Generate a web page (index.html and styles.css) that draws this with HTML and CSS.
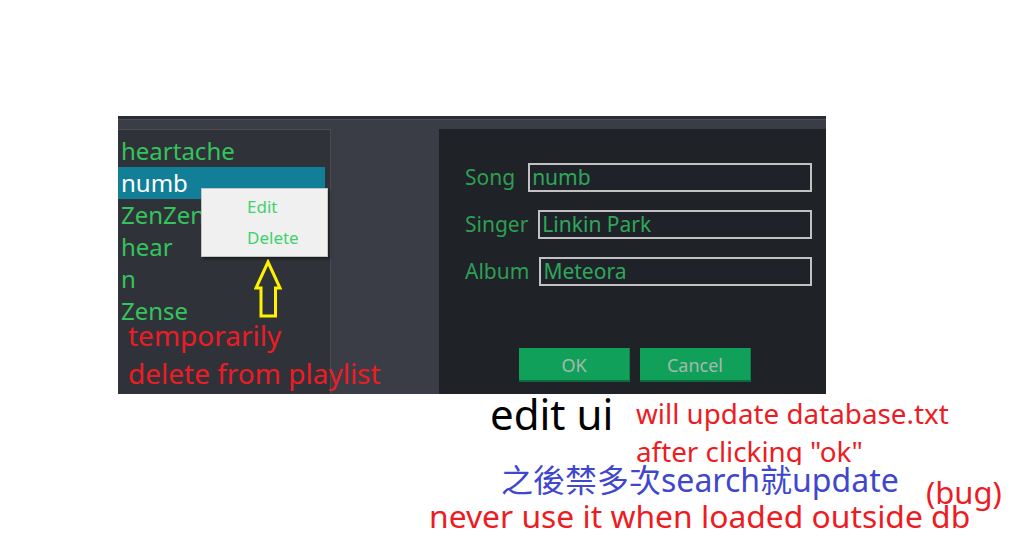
FILE: index.html
```html
<!DOCTYPE html>
<html>
<head>
<meta charset="utf-8">
<link rel="stylesheet" href="styles.css">
</head>
<body>
<div class="page">
  <div class="shot">
    <div class="topbar"></div>
    <div class="panes">
      <ul class="playlist">
        <li class="item">heartache</li>
        <li class="item selected">numb</li>
        <li class="item">ZenZen</li>
        <li class="item">hear</li>
        <li class="item">n</li>
        <li class="item">Zense</li>
      </ul>
      <div class="dialog">
        <div class="field"><span class="label label-song">Song</span><div class="input">numb</div></div>
        <div class="field"><span class="label">Singer</span><div class="input">Linkin Park</div></div>
        <div class="field"><span class="label">Album</span><div class="input">Meteora</div></div>
        <div class="buttons">
          <div class="btn">OK</div>
          <div class="btn">Cancel</div>
        </div>
      </div>
    </div>
  </div>

  <div class="menu">
    <div class="menu-item">Edit</div>
    <div class="menu-item">Delete</div>
  </div>

  <svg class="arrow" width="30" height="62" viewBox="0 0 30 62">
    <path d="M14 3 L26 29 L21.5 29 L21.5 57 L7 57 L7 29 L2 29 Z" fill="none" stroke="#fff200" stroke-width="3" stroke-linejoin="miter"/>
  </svg>

  <div class="note note-temp">temporarily<br>delete from playlist</div>
  <div class="note note-edit">edit ui</div>
  <div class="note note-update">will update database.txt<br>after clicking "ok"</div>
  <div class="note note-zh">之後禁多次search就update</div>
  <div class="note note-bug">(bug)</div>
  <div class="note note-never">never use it when loaded outside db</div>
</div>
</body>
</html>
```

FILE: styles.css
```css
html, body {
  margin: 0;
  padding: 0;
  background: #ffffff;
}

body {
  font-family: "Noto Sans", "Noto Sans CJK TC", sans-serif;
}

.page {
  position: relative;
  width: 1014px;
  height: 549px;
  overflow: hidden;
}

.shot {
  margin: 116px 0 0 118px;
  width: 708px;
  height: 278px;
  background: #3a3d45;
  display: flex;
  flex-direction: column;
}

.topbar {
  height: 13px;
  flex: none;
  background: linear-gradient(to bottom, #2b2e35 0, #2b2e35 3px, #4b4e55 3px, #4b4e55 4px, #3a3d45 4px);
}

.panes {
  flex: 1;
  display: flex;
  justify-content: space-between;
}

.playlist {
  list-style: none;
  margin: 0;
  padding: 5px 0 0 0;
  width: 212px;
  background: #2f3239;
  border-top: 1px solid #4a4c52;
  border-right: 1px solid #4a4c52;
}

.item {
  height: 32px;
  line-height: 32px;
  padding-left: 3px;
  margin-right: 5px;
  font-size: 24px;
  color: #33c45c;
  white-space: nowrap;
}

.item.selected {
  background: #127f99;
  color: #ffffff;
}

.dialog {
  width: 387px;
  box-sizing: border-box;
  background: #1f2227;
  padding: 34px 14px 0 26px;
  display: flex;
  flex-direction: column;
}

.field {
  display: flex;
  align-items: center;
  gap: 10px;
  height: 29px;
  margin-bottom: 18px;
}

.label {
  font-size: 21px;
  color: #2e9e55;
  line-height: 29px;
}

.label-song {
  margin-right: 3px;
}

.input {
  flex: 1;
  height: 29px;
  box-sizing: border-box;
  border: 2px solid #c2c2c2;
  background: #1f2329;
  color: #2fa759;
  font-size: 21px;
  line-height: 25px;
  padding-left: 2px;
  white-space: nowrap;
}

.buttons {
  display: flex;
  gap: 10px;
  margin-top: 44px;
  padding-left: 54px;
}

.btn {
  width: 111px;
  height: 34px;
  box-sizing: border-box;
  background: #10a05a;
  border-bottom: 2px solid #0b6a3c;
  border-right: 1px solid #0d8049;
  color: #a7b9ac;
  font-size: 18px;
  line-height: 34px;
  text-align: center;
}

.menu {
  position: absolute;
  left: 201px;
  top: 188px;
  width: 127px;
  height: 69px;
  box-sizing: border-box;
  padding: 3px 0;
  background: #f0f0f0;
  border: 1px solid #c4c4c4;
  box-shadow: 2px 2px 3px rgba(0, 0, 0, 0.45);
}

.menu-item {
  height: 31px;
  line-height: 30px;
  padding-left: 45px;
  font-size: 17px;
  color: #3ed26d;
}

.arrow {
  position: absolute;
  left: 254px;
  top: 259px;
}

.note {
  position: absolute;
  white-space: nowrap;
  line-height: 1;
}

.note-temp {
  left: 128px;
  top: 316px;
  font-size: 28px;
  line-height: 38px;
  color: #ed1c24;
}

.note-edit {
  left: 490px;
  top: 393px;
  font-size: 42px;
  color: #000000;
}

.note-update {
  left: 636px;
  top: 394px;
  height: 71px;
  overflow: hidden;
  font-size: 27.8px;
  line-height: 38px;
  color: #ed1c24;
}

.note-zh {
  left: 501px;
  top: 460px;
  font-size: 32px;
  line-height: 40px;
  color: #3f48cc;
}

.note-bug {
  left: 926px;
  top: 477px;
  font-size: 31px;
  color: #ed1c24;
}

.note-never {
  left: 429px;
  top: 500px;
  font-size: 31.8px;
  color: #ed1c24;
}
```
